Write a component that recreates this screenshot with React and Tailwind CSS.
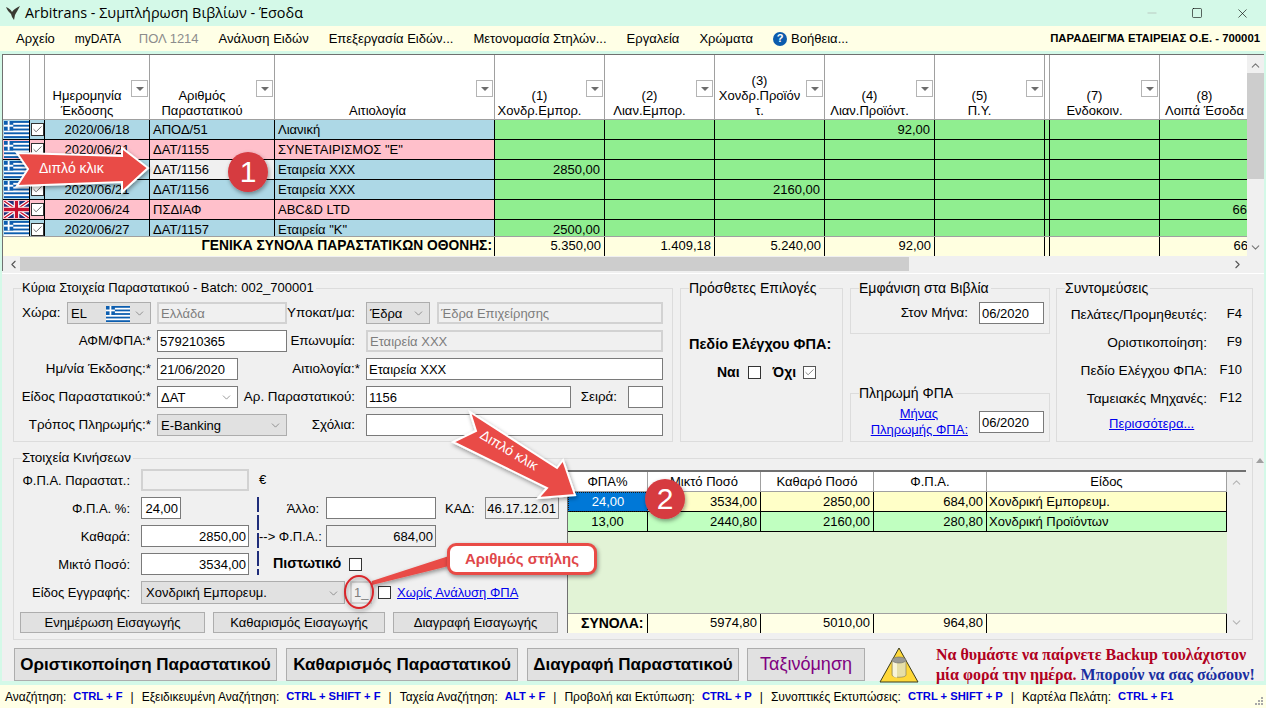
import { ChevronDown, ChevronUp, ChevronLeft, ChevronRight, Check, Minus, Square, X } from 'lucide-react'

const COLS = 'grid w-max grid-cols-[27px_15px_105px_125px_220px_110px_110px_110px_110px_110px_5px_110px_110px]'
const SUB_COLS = 'grid grid-cols-[80px_113px_113px_113px_240px]'

const HEADERS = [
  { lines: ['(1)', 'Χονδρ.Εμπορ.'] },
  { lines: ['(2)', 'Λιαν.Εμπορ.'] },
  { lines: ['(3)', 'Χονδρ.Προϊόν', 'τ.'] },
  { lines: ['(4)', 'Λιαν.Προϊόντ.'] },
  { lines: ['(5)', 'Π.Υ.'] },
  { lines: [], thin: true },
  { lines: ['(7)', 'Ενδοκοιν.'] },
  { lines: ['(8)', 'Λοιπά Έσοδα'] },
]

const ROWS = [
  { flag: 'gr', date: '2020/06/18', doc: 'ΑΠΟΔ/51', reason: 'Λιανική', bg: 'bg-[#add8e6]', vals: { 3: '92,00' } },
  { flag: 'gr', date: '2020/06/21', doc: 'ΔΑΤ/1155', reason: 'ΣΥΝΕΤΑΙΡΙΣΜΟΣ "Ε"', bg: 'bg-[#ffc0cb]', vals: {} },
  { flag: 'gr', date: '', doc: 'ΔΑΤ/1156', reason: 'Εταιρεία ΧΧΧ', bg: 'bg-[#add8e6]', vals: { 0: '2850,00' }, selected: true },
  { flag: 'gr', date: '2020/06/21', doc: 'ΔΑΤ/1156', reason: 'Εταιρεία ΧΧΧ', bg: 'bg-[#add8e6]', vals: { 2: '2160,00' } },
  { flag: 'uk', date: '2020/06/24', doc: 'ΠΣΔΙΑΦ', reason: 'ABC&D LTD', bg: 'bg-[#ffc0cb]', vals: { 7: '66,00' } },
  { flag: 'gr', date: '2020/06/27', doc: 'ΔΑΤ/1157', reason: 'Εταιρεία "Κ"', bg: 'bg-[#add8e6]', vals: { 0: '2500,00' } },
]

const TOTALS = ['5.350,00', '1.409,18', '5.240,00', '92,00', '', '', '', '66,00']

const SHORTCUTS = [
  ['Αναζήτηση:', 'CTRL + F'],
  ['Εξειδικευμένη Αναζήτηση:', 'CTRL + SHIFT + F'],
  ['Ταχεία Αναζήτηση:', 'ALT + F'],
  ['Προβολή και Εκτύπωση:', 'CTRL + P'],
  ['Συνοπτικές Εκτυπώσεις:', 'CTRL + SHIFT + P'],
  ['Καρτέλα Πελάτη:', 'CTRL + F1'],
]

function GreekFlag({ className }) {
  return (
    <svg viewBox="0 0 27 18" preserveAspectRatio="none" className={className}>
      <rect width="27" height="18" fill="#0d5eaf" />
      {[2, 6, 10, 14].map((y) => (
        <rect key={y} y={y} width="27" height="2" fill="#fff" />
      ))}
      <rect width="10" height="10" fill="#0d5eaf" />
      <rect x="4" width="2" height="10" fill="#fff" />
      <rect y="4" width="10" height="2" fill="#fff" />
    </svg>
  )
}

function UkFlag({ className }) {
  return (
    <svg viewBox="0 0 27 18" preserveAspectRatio="none" className={className}>
      <rect width="27" height="18" fill="#1f2f7a" />
      <path d="M0 0L27 18M27 0L0 18" stroke="#fff" strokeWidth="4" />
      <path d="M0 0L27 18M27 0L0 18" stroke="#c8102e" strokeWidth="1.5" />
      <path d="M13.5 0V18M0 9H27" stroke="#fff" strokeWidth="6" />
      <path d="M13.5 0V18M0 9H27" stroke="#c8102e" strokeWidth="3.5" />
    </svg>
  )
}

function FilterBtn() {
  return (
    <span className="absolute right-[1px] top-[25px] flex h-[17px] w-[17px] items-center justify-center border border-[#b4b4b4] bg-white">
      <span className="h-0 w-0 border-x-[4px] border-t-[4px] border-x-transparent border-t-[#6d6d6d]" />
    </span>
  )
}

function GridBox({ checked }) {
  return (
    <span className="flex h-[13px] w-[13px] items-center justify-center border border-[#333] bg-white">
      {checked && <Check size={11} strokeWidth={1.5} className="text-[#333]" />}
    </span>
  )
}

function HeadCell({ lines, filter = true, className = '' }) {
  return (
    <div className={`relative flex h-[65px] flex-col items-center justify-end border-r border-b border-[#a0a0a0] bg-white pb-[1px] leading-[15px] ${className}`}>
      {lines.map((l) => (
        <span key={l} className="whitespace-nowrap">{l}</span>
      ))}
      {filter && <FilterBtn />}
    </div>
  )
}

function Field({ w, children, right, disabled, className = '' }) {
  const look = disabled
    ? 'border-2 border-[#d2d2d2] bg-[#f0f0f0] text-[#7d7d7d]'
    : 'border border-[#7a7a7a] bg-white text-black'
  return (
    <div className={`flex h-[22px] shrink-0 items-center px-[2px] pt-[1px] whitespace-nowrap ${look} ${right ? 'justify-end' : ''} ${w} ${className}`}>
      {children}
    </div>
  )
}

function Select({ w, children, white, className = '' }) {
  return (
    <div className={`flex h-[22px] shrink-0 items-center justify-between border pt-[1px] pl-[3px] pr-[4px] whitespace-nowrap ${white ? 'border-[#7a7a7a] bg-white' : 'border-[#adadad] bg-[#e1e1e1]'} ${w} ${className}`}>
      {children}
      <ChevronDown size={13} strokeWidth={1.2} className="shrink-0 text-[#666]" />
    </div>
  )
}

function Label({ w, children, className = '' }) {
  return <div className={`shrink-0 pt-[1px] text-right text-[13.4px] whitespace-nowrap ${w} ${className}`}>{children}</div>
}

function Group({ title, className = '', legend = 'text-[14px]', children }) {
  return (
    <fieldset className={`border border-[#dcdcdc] ${className}`}>
      <legend className={`ml-[8px] h-[16px] pr-[2px] leading-[16px] ${legend}`}>{title}</legend>
      {children}
    </fieldset>
  )
}

function BigButton({ w, className = '', children }) {
  return (
    <div className={`flex h-[33px] shrink-0 items-center justify-center border border-[#adadad] bg-[#e1e1e1] font-bold ${w} ${className}`}>
      {children}
    </div>
  )
}

function SmallButton({ w, children }) {
  return (
    <div className={`flex h-[21px] shrink-0 items-center justify-center border border-[#adadad] bg-[#e1e1e1] ${w}`}>
      {children}
    </div>
  )
}

function TopGrid() {
  return (
    <div className="flex h-[217px] border-t border-l border-[#707070]">
      <div className="flex w-[1244px] flex-col overflow-hidden">
        <div className={COLS}>
          <HeadCell lines={[]} filter={false} />
          <HeadCell lines={[]} filter={false} />
          <HeadCell lines={['Ημερομηνία', 'Έκδοσης']} className="pr-[20px]" />
          <HeadCell lines={['Αριθμός', 'Παραστατικού']} className="pr-[20px]" />
          <HeadCell lines={['Αιτιολογία']} className="pr-[14px]" />
          {HEADERS.map((h, i) => (
            <HeadCell key={i} lines={h.lines} filter={!h.thin} className={h.thin ? '' : 'pr-[20px]'} />
          ))}
        </div>
        <div className="h-[116px] overflow-hidden">
          {ROWS.map((r, i) => (
            <div key={i} className={`${COLS} h-[20px] leading-[19px]`}>
              <div className={`flex items-center justify-center border-r border-b border-black ${r.bg}`}>
                {r.flag === 'gr' ? <GreekFlag className="h-[17px] w-[25px]" /> : <UkFlag className="h-[17px] w-[25px]" />}
              </div>
              <div className={`flex items-center justify-center border-r border-b border-black ${r.bg}`}>
                <GridBox checked />
              </div>
              <div className={`border-r border-b border-black text-center ${r.bg}`}>{r.date}</div>
              <div className={`border-r border-b border-black pl-[3px] ${r.selected ? 'bg-[#f0f0f0]' : r.bg}`}>{r.doc}</div>
              <div className={`border-r border-b border-black pl-[3px] ${r.bg}`}>{r.reason}</div>
              {HEADERS.map((h, c) => (
                <div key={c} className="border-r border-b border-black bg-[#90ee90] pr-[4px] text-right">{r.vals[c]}</div>
              ))}
            </div>
          ))}
        </div>
        <div className="flex h-[20px] w-max border-t border-[#a0a0a0] bg-[#ffffe0] leading-[18px]">
          <div className="w-[492px] border-r border-black pr-[2px] text-right text-[13.8px] font-bold">ΓΕΝΙΚΑ ΣΥΝΟΛΑ ΠΑΡΑΣΤΑΤΙΚΩΝ ΟΘΟΝΗΣ:</div>
          {TOTALS.map((t, i) => (
            <div key={i} className={`${HEADERS[i].thin ? 'w-[5px]' : 'w-[110px]'} border-r border-black pr-[3px] text-right`}>{t}</div>
          ))}
        </div>
        <div className="mt-[1px] flex h-[14px] items-center bg-[#f0f0f0]">
          <ChevronLeft size={13} strokeWidth={2} className="ml-[4px] w-[13px] shrink-0 text-[#555]" />
          <div className="h-full w-[889px] shrink-0 bg-[#cdcdcd]" />
          <div className="flex-1" />
          <ChevronRight size={13} strokeWidth={2} className="mr-[3px] shrink-0 text-[#555]" />
        </div>
      </div>
      <div className="flex w-[17px] flex-col items-center bg-[#f0f0f0]">
        <ChevronUp size={13} strokeWidth={2} className="mt-[4px] text-[#777]" />
        <div className="mt-[1px] h-[106px] w-full bg-[#cdcdcd]" />
        <div className="flex-1" />
        <ChevronDown size={13} strokeWidth={2} className="mb-[17px] text-[#777]" />
      </div>
    </div>
  )
}

function MainDetails() {
  return (
    <Group title="Κύρια Στοιχεία Παραστατικού - Batch: 002_700001" legend="text-[13px]" className="h-[162px] w-[660px] shrink-0">
      <div className="flex flex-col gap-[6px] pt-[6px]">
        <div className="flex items-center">
          <div className="w-[53px] shrink-0 pt-[1px] pl-[8px] text-[13.4px]">Χώρα:</div>
          <Select w="w-[84px]">
            <span className="flex flex-1 items-center justify-between pr-[3px]">
              EL
              <GreekFlag className="h-[16px] w-[24px]" />
            </span>
          </Select>
          <Field w="w-[130px]" disabled className="ml-[6px]">Ελλάδα</Field>
          <Label w="w-[68px]">Υποκατ/μα:</Label>
          <Select w="w-[64px]" className="ml-[11px]">Έδρα</Select>
          <Field w="w-[226px]" disabled className="ml-[7px]">Έδρα Επιχείρησης</Field>
        </div>
        <div className="flex items-center">
          <Label w="w-[137px]">ΑΦΜ/ΦΠΑ:*</Label>
          <Field w="w-[130px]" className="ml-[6px]">579210365</Field>
          <Label w="w-[68px]">Επωνυμία:</Label>
          <Field w="w-[297px]" disabled className="ml-[11px]">Εταιρεία ΧΧΧ</Field>
        </div>
        <div className="flex items-center">
          <Label w="w-[137px]">Ημ/νία Έκδοσης:*</Label>
          <Field w="w-[81px]" className="ml-[6px]">21/06/2020</Field>
          <Label w="w-[122px]">Αιτιολογία:*</Label>
          <Field w="w-[297px]" className="ml-[6px]">Εταιρεία ΧΧΧ</Field>
        </div>
        <div className="flex items-center">
          <Label w="w-[137px]">Είδος Παραστατικού:*</Label>
          <Select w="w-[81px]" white className="ml-[6px]">ΔΑΤ</Select>
          <Label w="w-[117px]">Αρ. Παραστατικού:</Label>
          <Field w="w-[205px]" className="ml-[11px]">1156</Field>
          <Label w="w-[46px]">Σειρά:</Label>
          <Field w="w-[35px]" className="ml-[11px]" />
        </div>
        <div className="flex items-center">
          <Label w="w-[137px]">Τρόπος Πληρωμής:*</Label>
          <Select w="w-[130px]" className="ml-[6px]">E-Banking</Select>
          <Label w="w-[68px]">Σχόλια:</Label>
          <Field w="w-[297px]" className="ml-[11px]" />
        </div>
      </div>
    </Group>
  )
}

function ExtraOptions() {
  return (
    <Group title="Πρόσθετες Επιλογές" className="h-[162px] w-[163px] shrink-0">
      <div className="pt-[40px] pl-[8px] text-[14.5px] leading-[16px] font-bold whitespace-nowrap">Πεδίο Ελέγχου ΦΠΑ:</div>
      <div className="mt-[12px] flex items-center pl-[36px] text-[14px] leading-[16px] font-bold">
        <span>Ναι</span>
        <span className="ml-[8px] h-[13px] w-[13px] border border-[#333] bg-white" />
        <span className="ml-[12px]">Όχι</span>
        <span className="ml-[7px] flex h-[13px] w-[13px] items-center justify-center border border-[#555] bg-white">
          <Check size={11} strokeWidth={1.5} className="text-[#555]" />
        </span>
      </div>
    </Group>
  )
}

function PeriodColumn() {
  return (
    <div className="flex h-[162px] w-[200px] shrink-0 flex-col justify-between">
      <Group title="Εμφάνιση στα Βιβλία" className="h-[54px]">
        <div className="flex items-center pt-[6px]">
          <Label w="w-[117px]">Στον Μήνα:</Label>
          <Field w="w-[65px]" className="ml-[11px]">06/2020</Field>
        </div>
      </Group>
      <Group title="Πληρωμή ΦΠΑ" className="h-[57px]">
        <div className="flex items-center pt-[5px]">
          <div className="w-[117px] shrink-0 text-right leading-[16px] text-[#0000ee] underline">
            <div className="pr-[30px]">Μήνας</div>
            <div className="whitespace-nowrap">Πληρωμής ΦΠΑ:</div>
          </div>
          <Field w="w-[65px]" className="ml-[11px]">06/2020</Field>
        </div>
      </Group>
    </div>
  )
}

function ShortcutsBox() {
  const items = [
    ['Πελάτες/Προμηθευτές:', 'F4'],
    ['Οριστικοποίηση:', 'F9'],
    ['Πεδίο Ελέγχου ΦΠΑ:', 'F10'],
    ['Ταμειακές Μηχανές:', 'F12'],
  ]
  return (
    <Group title="Συντομεύσεις" className="ml-[-1px] h-[162px] w-[197px] shrink-0">
      <div className="flex flex-col gap-[12px] pt-[10px]">
        {items.map(([l, k]) => (
          <div key={k} className="flex h-[16px] items-center leading-[16px]">
            <Label w="w-[150px]" className="text-[13.7px]">{l}</Label>
            <div className="w-[35px] text-right">{k}</div>
          </div>
        ))}
        <div className="mt-[-2px] h-[16px] pl-[52px] leading-[16px] whitespace-nowrap text-[#0000ee] underline">Περισσότερα...</div>
      </div>
    </Group>
  )
}

function MovementForm() {
  return (
    <div className="w-[553px] shrink-0 pt-[3px]">
      <div className="flex items-center">
        <Label w="w-[116px]" className="!text-[13px]">Φ.Π.Α. Παραστατ.:</Label>
        <Field w="w-[108px]" disabled className="ml-[11px]" />
        <span className="ml-[10px]">€</span>
      </div>
      <div className="mt-[6px] flex">
        <div className="flex flex-col gap-[6px]">
          <div className="flex items-center">
            <Label w="w-[116px]" className="!text-[13px]">Φ.Π.Α. %:</Label>
            <Field w="w-[40px]" className="ml-[11px]" right>24,00</Field>
          </div>
          <div className="flex items-center">
            <Label w="w-[116px]" className="!text-[13px]">Καθαρά:</Label>
            <Field w="w-[108px]" className="ml-[11px]" right>2850,00</Field>
          </div>
          <div className="flex items-center">
            <Label w="w-[116px]" className="!text-[13px]">Μικτό Ποσό:</Label>
            <Field w="w-[108px]" className="ml-[11px]" right>3534,00</Field>
          </div>
        </div>
        <div className="ml-[8px] h-[78px] w-[2px] bg-[repeating-linear-gradient(to_bottom,#1f2d7a_0,#1f2d7a_15px,transparent_15px,transparent_18px)]" />
        <div className="flex flex-col gap-[6px]">
          <div className="flex items-center">
            <Label w="w-[60px]" className="!text-[13px]">Άλλο:</Label>
            <Field w="w-[110px]" className="ml-[7px]" />
            <span className="ml-[9px] w-[40px] shrink-0 pt-[1px]">ΚΑΔ:</span>
            <Field w="w-[74px]" right className="!border-[#8c8c8c] !bg-[#f0f0f0]">46.17.12.01</Field>
          </div>
          <div className="flex items-center">
            <Label w="w-[60px]" className="!text-[13px]">--&gt; Φ.Π.Α.:</Label>
            <Field w="w-[110px]" right className="ml-[7px] !border !border-[#7a7a7a] !bg-[#f0f0f0]">684,00</Field>
          </div>
          <div className="flex h-[22px] items-center pl-[14px] text-[14.3px] font-bold">
            Πιστωτικό
            <span className="ml-[8px] h-[13px] w-[13px] border border-[#333] bg-white" />
          </div>
        </div>
      </div>
      <div className="mt-[6px] flex items-center">
        <Label w="w-[116px]" className="!text-[13px]">Είδος Εγγραφής:</Label>
        <Select w="w-[204px]" className="ml-[11px] !h-[23px] !pl-[4px]">Χονδρική Εμπορευμ.</Select>
        <Field w="w-[22px]" disabled className="ml-[5px] !h-[23px]">1_</Field>
        <span className="ml-[6px] h-[13px] w-[13px] border border-[#333] bg-white" />
        <span className="ml-[6px] whitespace-nowrap text-[#0000ee] underline">Χωρίς Ανάλυση ΦΠΑ</span>
      </div>
      <div className="mt-[8px] ml-[6px] flex gap-[8px]">
        <SmallButton w="w-[185px]">Ενημέρωση Εισαγωγής</SmallButton>
        <SmallButton w="w-[172px]">Καθαρισμός Εισαγωγής</SmallButton>
        <SmallButton w="w-[165px]">Διαγραφή Εισαγωγής</SmallButton>
      </div>
    </div>
  )
}

function VatGrid() {
  const cell = 'border-r border-b border-black pr-[3px] text-right'
  return (
    <div className="mt-[4px] flex h-[163px] w-[679px] shrink-0 border-t-2 border-l border-[#707070]">
      <div className="flex w-[659px] flex-col">
        <div className={`${SUB_COLS} h-[20px] bg-white leading-[19px]`}>
          {['ΦΠΑ%', 'Μικτό Ποσό', 'Καθαρό Ποσό', 'Φ.Π.Α.', 'Είδος'].map((h) => (
            <div key={h} className="border-r border-b border-[#a0a0a0] text-center">{h}</div>
          ))}
        </div>
        <div className={`${SUB_COLS} h-[20px] bg-[#ffffc8] leading-[19px]`}>
          <div className="border-b border-black bg-[#0078d7] text-center text-white outline-1 -outline-offset-1 outline-dotted outline-[#1a1a1a]">24,00</div>
          <div className={cell}>3534,00</div>
          <div className={cell}>2850,00</div>
          <div className={cell}>684,00</div>
          <div className="border-r border-b border-black pl-[2px]">Χονδρική Εμπορευμ.</div>
        </div>
        <div className={`${SUB_COLS} h-[20px] bg-[#c0ffc0] leading-[19px]`}>
          <div className="border-r border-b border-black text-center">13,00</div>
          <div className={cell}>2440,80</div>
          <div className={cell}>2160,00</div>
          <div className={cell}>280,80</div>
          <div className="border-r border-b border-black pl-[2px]">Χονδρική Προϊόντων</div>
        </div>
        <div className="flex-1 bg-[#e2f3d6]" />
        <div className={`${SUB_COLS} h-[20px] border-t border-[#a0a0a0] bg-[#ffffe6] leading-[18px]`}>
          <div className="border-r border-black pl-[13px] text-[14px] font-bold whitespace-nowrap">ΣΥΝΟΛΑ:</div>
          <div className="border-r border-black pr-[3px] text-right">5974,80</div>
          <div className="border-r border-black pr-[3px] text-right">5010,00</div>
          <div className="border-r border-black pr-[3px] text-right">964,80</div>
          <div className="border-r border-black" />
        </div>
      </div>
      <div className="flex flex-1 flex-col items-center justify-between bg-[#f0f0f0] py-[4px]">
        <ChevronUp size={13} strokeWidth={2} className="text-[#b5b5b5]" />
        <ChevronDown size={13} strokeWidth={2} className="text-[#b5b5b5]" />
      </div>
    </div>
  )
}

function BackupIcon() {
  return (
    <svg viewBox="0 0 40 36" className="h-[36px] w-[40px] shrink-0">
      <path d="M20 1L39 35H1Z" fill="#ffd83a" stroke="#3a3a1a" strokeWidth="1" strokeLinejoin="round" />
      <path d="M13 13V28C13 31 27 31 27 28V13Z" fill="#e6dfa8" stroke="#77735a" strokeWidth=".6" />
      <path d="M14 14V28C14 30 17 30.500 18 30.500V14Z" fill="#f8f4d8" />
      <ellipse cx="20" cy="13" rx="7" ry="3" fill="#9a9a94" stroke="#6a6a64" strokeWidth=".6" />
    </svg>
  )
}

function Overlays() {
  return (
    <>
      <svg viewBox="0 0 1266 708" className="pointer-events-none absolute inset-0 h-[708px] w-[1266px]">
        <defs>
          <filter id="soft" x="-20%" y="-20%" width="140%" height="140%">
            <feDropShadow dx="1" dy="2" stdDeviation="2" floodColor="#000" floodOpacity=".4" />
          </filter>
        </defs>
        <polygon points="17,153 122,156 122,148 148,168 122,192 122,182 17,186 28,169" fill="#e94b46" stroke="#fff" strokeWidth="2" filter="url(#soft)" />
        <polygon points="470,412 557,468 563,460 575,495 538,498 547,488 453,442 476,431" fill="#e94b46" stroke="#fff" strokeWidth="2" filter="url(#soft)" />
        <circle cx="248" cy="172" r="20" fill="#d63a40" filter="url(#soft)" />
        <circle cx="665" cy="499" r="20" fill="#d63a40" filter="url(#soft)" />
        <polygon points="372,585 372,581 449,556 449,566" fill="#e94b46" filter="url(#soft)" />
        <ellipse cx="359" cy="592" rx="14" ry="16" fill="none" stroke="#d9262c" strokeWidth="2" filter="url(#soft)" />
      </svg>
      <span className="absolute top-[159px] left-[39px] text-[14px] leading-[18px] text-white">Διπλό κλικ</span>
      <span className="absolute top-[154px] left-[236px] w-[24px] text-center text-[30px] leading-[36px] text-white">1</span>
      <span className="absolute top-[481px] left-[653px] w-[24px] text-center text-[30px] leading-[36px] text-white">2</span>
      <span className="absolute top-[441px] left-[477px] rotate-[31deg] text-[14px] leading-[18px] text-white">Διπλό κλικ</span>
      <div className="absolute top-[543px] left-[447px] flex h-[32px] w-[150px] items-center justify-center rounded-[9px] border-[3px] border-[#e94b46] bg-white text-[15px] font-bold text-[#e0474a] shadow-[1px_2px_4px_rgba(0,0,0,.4)]">
        Αριθμός στήλης
      </div>
      <span className="absolute top-[458px] right-[2px] h-0 w-0 border-x-[4px] border-b-[5px] border-x-transparent border-b-[#a0a0a0]" />
    </>
  )
}

export default function App() {
  return (
    <div className="relative h-[708px] w-[1266px] overflow-hidden bg-[#d4f9e8] px-[2px] text-[13px] text-black [font-family:'Liberation_Sans',sans-serif]">
      {/* title bar */}
      <div className="mx-[-2px] flex h-[26px] items-center pl-[6px] text-[14.4px] [font-family:'Open_Sans',sans-serif]">
        <svg viewBox="0 0 14 14" className="h-[14px] w-[14px] shrink-0">
          <path d="M0 1C3 2 5 4 6 6C7 4 10 2 14 0C12 4 10 7 9 9L8 14L6 11L5 8C3 6 1 4 0 1Z" fill="#3a3a32" />
        </svg>
        <span className="ml-[5px] whitespace-nowrap">Arbitrans - Συμπλήρωση Βιβλίων - Έσοδα</span>
        <div className="ml-auto flex items-center gap-[32px] pr-[16px]">
          <Minus size={14} strokeWidth={1} className="text-[#aaa]" />
          <Square size={12} strokeWidth={1.2} />
          <X size={15} strokeWidth={1} />
        </div>
      </div>
      {/* menu */}
      <div className="mx-[-2px] flex h-[25px] items-center gap-[20px] bg-[#ffffe6] pl-[16px] whitespace-nowrap">
        <span>Αρχείο</span>
        <span className="w-[44px] text-[12px]">myDATA</span>
        <span className="text-[#8c8c8c]">ΠΟΛ 1214</span>
        <span>Ανάλυση Ειδών</span>
        <span>Επεξεργασία Ειδών...</span>
        <span>Μετονομασία Στηλών...</span>
        <span>Εργαλεία</span>
        <span>Χρώματα</span>
        <span className="flex items-center gap-[4px]">
          <span className="flex h-[14px] w-[14px] items-center justify-center rounded-full bg-[#0b5cad] text-[11px] font-bold text-white">?</span>
          Βοήθεια...
        </span>
        <span className="mr-[6px] ml-auto text-[11.35px] font-bold">ΠΑΡΑΔΕΙΓΜΑ ΕΤΑΙΡΕΙΑΣ Ο.Ε. - 700001</span>
      </div>

      <div className="mt-[3px] h-[627px] bg-[#f0f0f0]">
        <TopGrid />
        <div className="mt-[2px] h-[1px] bg-white" />
        {/* header forms */}
        <div className="mt-[6px] flex gap-[7px] pl-[11px]">
          <MainDetails />
          <ExtraOptions />
          <PeriodColumn />
          <ShortcutsBox />
        </div>
        {/* movements */}
        <Group title="Στοιχεία Κινήσεων" legend="text-[13.5px]" className="mt-[8px] ml-[11px] h-[190px] w-[1240px]">
          <div className="flex">
            <MovementForm />
            <VatGrid />
          </div>
        </Group>
        {/* bottom actions */}
        <div className="mt-[8px] flex h-[33px] items-center pl-[12px] text-[17px]">
          <BigButton w="w-[263px]">Οριστικοποίηση Παραστατικού</BigButton>
          <BigButton w="w-[232px]" className="ml-[9px]">Καθαρισμός Παραστατικού</BigButton>
          <BigButton w="w-[212px]" className="ml-[9px]">Διαγραφή Παραστατικού</BigButton>
          <BigButton w="w-[118px]" className="ml-[8px] text-[18px] !font-normal text-[#800080]">Ταξινόμηση</BigButton>
          <div className="ml-[14px]"><BackupIcon /></div>
          <div className="ml-[17px] text-[16px] leading-[20px] font-bold whitespace-nowrap text-[#b00020] [font-family:'Liberation_Serif',serif]">
            <div>Να θυμάστε να παίρνετε Backup τουλάχιστον</div>
            <div>μία φορά την ημέρα. <span className="text-[#1a2fa0]">Μπορούν να σας σώσουν!</span></div>
          </div>
        </div>
      </div>
      {/* status bar */}
      <div className="relative mx-[-2px] mt-[4px] flex h-[23px] items-center bg-[#ffffe6] pl-[5px] text-[12px] whitespace-nowrap">
        {SHORTCUTS.map(([label, keys], i) => (
          <span key={label} className="flex items-center">
            {i > 0 && <span className="mx-[8px]">|</span>}
            <span>{label}</span>
            <span className="ml-[7px] text-[11.2px] font-bold text-[#0000e0]">{keys}</span>
          </span>
        ))}
        <span className="absolute right-[3px] bottom-[3px] grid grid-cols-3 gap-[1px]">
          {[0, 1, 2, 3, 4, 5, 6, 7, 8].map((d) => (
            <span key={d} className={`h-[2px] w-[2px] ${[0, 1, 3].includes(d) ? '' : 'bg-[#a8a8a8]'}`} />
          ))}
        </span>
      </div>
      <Overlays />
    </div>
  )
}
